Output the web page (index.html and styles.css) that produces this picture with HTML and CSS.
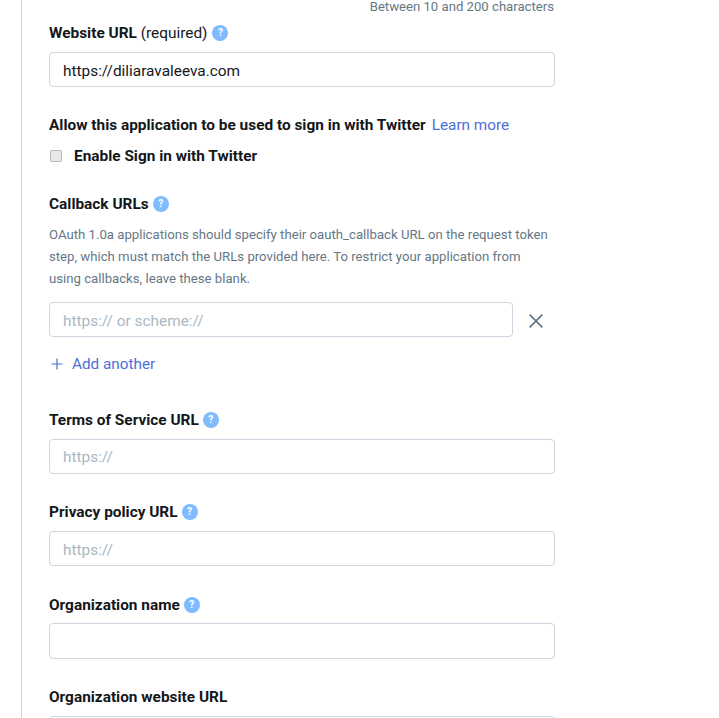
FILE: index.html
```html
<!DOCTYPE html>
<html lang="en">
<head>
<meta charset="utf-8">
<title>App details</title>
<link rel="stylesheet" href="styles.css">
</head>
<body>
<main class="page">
  <form class="form">
    <p class="hint">Between 10 and 200 characters</p>

    <section class="field field-website">
      <div class="label-row"><label class="label">Website URL <span class="label-note">(required)</span></label><span class="help help-wide">?</span></div>
      <input class="input input-low" type="text" value="https://diliaravaleeva.com">
    </section>

    <section class="field field-signin">
      <div class="label-row"><span class="label">Allow this application to be used to sign in with Twitter</span><a class="link learn" href="#">Learn more</a></div>
      <label class="check-row"><span class="checkbox"></span><span class="label">Enable Sign in with Twitter</span></label>
    </section>

    <section class="field field-callback">
      <div class="label-row"><span class="label">Callback URLs</span><span class="help">?</span></div>
      <p class="desc">OAuth 1.0a applications should specify their oauth_callback URL on the request token step, which must match the URLs provided here. To restrict your application from using callbacks, leave these blank.</p>
      <div class="input-row">
        <input class="input input-low" type="text" placeholder="https:// or scheme://">
        <svg class="remove" width="14" height="14" viewBox="0 0 14 14" aria-hidden="true"><path d="M.7.7l12.6 12.6M13.3.7L.7 13.3"/></svg>
      </div>
      <a class="add link" href="#"><svg class="plus" width="12" height="12" viewBox="0 0 12 12" aria-hidden="true"><path d="M6 .5v11M.5 6h11"/></svg>Add another</a>
    </section>

    <section class="field field-terms">
      <div class="label-row"><span class="label">Terms of Service URL</span><span class="help">?</span></div>
      <input class="input" type="text" placeholder="https://">
    </section>

    <section class="field field-next">
      <div class="label-row"><span class="label">Privacy policy URL</span><span class="help">?</span></div>
      <input class="input input-low" type="text" placeholder="https://">
    </section>

    <section class="field field-org">
      <div class="label-row"><span class="label">Organization name</span><span class="help">?</span></div>
      <input class="input input-tall" type="text">
    </section>

    <section class="field field-next">
      <div class="label-row"><span class="label">Organization website URL</span></div>
      <input class="input" type="text">
    </section>
  </form>
</main>
</body>
</html>
```
FILE: styles.css
```css
* { box-sizing: border-box; }
html, body { margin: 0; height: 718px; overflow: hidden; background: #fff; }
body { font-family: Roboto, "Liberation Sans", sans-serif; color: #14171a; }

.page { margin-left: 21px; height: 718px; border-left: 1px solid #ccd6e0; padding-left: 27px; overflow: hidden; }
.form { width: 506px; display: flex; flex-direction: column; }

.hint { margin: -1px 1px 0 0; font-size: 13.15px; line-height: 16px; color: #657786; text-align: right; }

.field { display: flex; flex-direction: column; }
.field-website { margin-top: 8px; }
.field-signin { margin-top: 28px; }
.field-callback { margin-top: 28px; }
.field-terms { margin-top: 36px; }
.field-next { margin-top: 28px; }
.field-org { margin-top: 29px; }

.label-row { display: flex; align-items: center; height: 20px; }
.label { font-size: 15.4px; font-weight: 700; line-height: 20px; color: #14171a; }
.label-note { font-weight: 400; }

.help { width: 16px; height: 16px; margin-left: 4px; border-radius: 50%; background: #7fbcff; color: #fff; font-size: 10px; font-weight: 700; line-height: 16px; text-align: center; flex: none; }
.help-wide { margin-left: 5px; }

.input { display: block; width: 100%; height: 35px; margin-top: 9px; padding: 1px 13px 0; border: 1px solid #ccd6e0; border-radius: 4px; background: #fff; font-family: inherit; font-size: 15.4px; color: #14171a; outline: none; }
.input::placeholder { color: #aab8c2; opacity: 1; }
.input-low { padding-top: 3px; }
.input-tall { height: 36px; margin-top: 8px; }

.link { color: #4f6fd9; text-decoration: none; font-size: 15.3px; line-height: 20px; }
.learn { margin-left: 6px; }

.check-row { display: flex; align-items: center; height: 20px; margin-top: 11px; }
.checkbox { width: 12px; height: 12px; margin-left: 1px; margin-right: 12px; border: 1px solid #b8b8b8; border-radius: 2px; background: #e9e9e9; flex: none; }

.desc { margin: 10px 0 0; font-size: 13.18px; line-height: 22px; color: #657786; }

.input-row { display: flex; align-items: flex-start; margin-top: 12px; }
.input-row .input { width: 464px; margin-top: 0; flex: none; }
.remove { margin: 12px 0 0 16px; flex: none; }
.remove path { fill: none; stroke: #657786; stroke-width: 1.7; }

.add { display: flex; align-items: center; margin-top: 17px; }
.plus { margin: 0 9px 0 2px; flex: none; }
.plus path { fill: none; stroke: #4f6fd9; stroke-width: 1.2; }
```
